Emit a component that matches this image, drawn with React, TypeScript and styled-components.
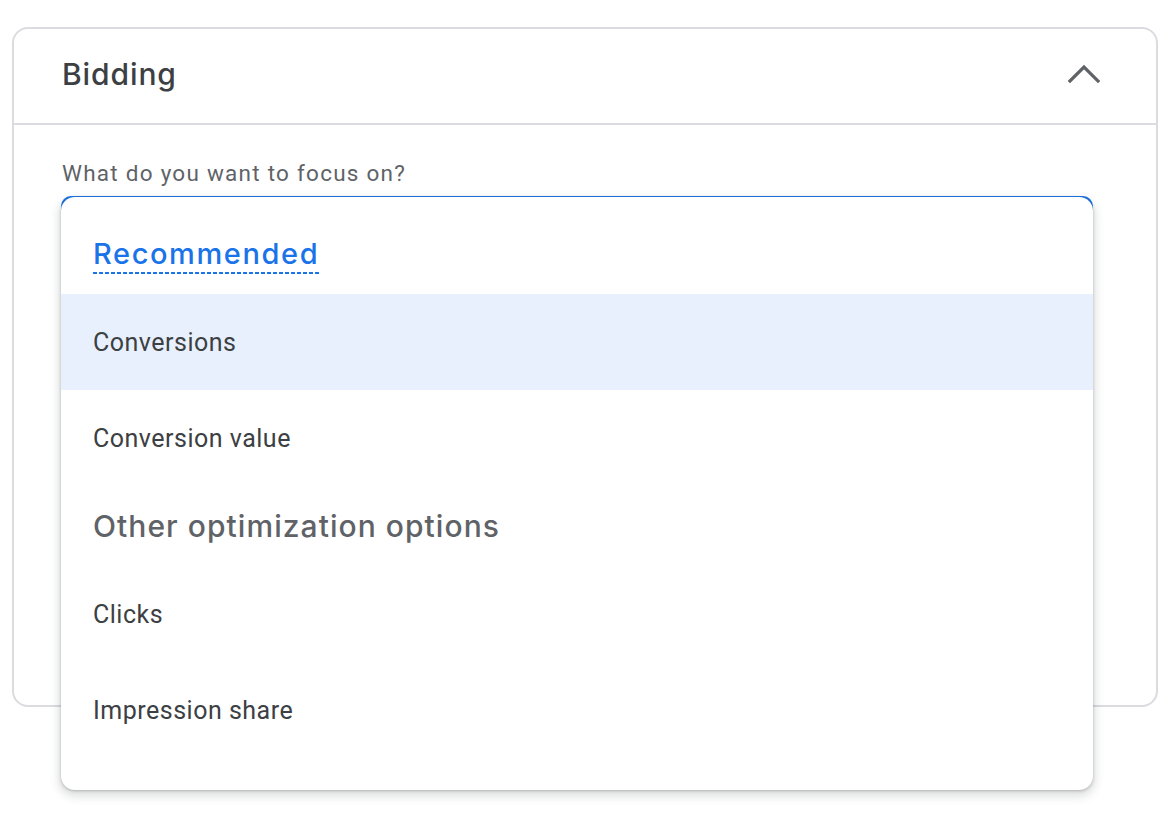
import React from "react";
import styled, { createGlobalStyle } from "styled-components";

const Global = createGlobalStyle`
  html, body { margin: 0; padding: 0; background: #fff; }
  body { font-family: Roboto, "Noto Sans", Arial, sans-serif; -webkit-font-smoothing: antialiased; }
`;

const Page = styled.div`
  padding: 27px 16px 0 12px;
  width: 1174px;
  height: 818px;
  box-sizing: border-box;
  overflow: hidden;
`;

const Card = styled.section`
  width: 1146px;
  box-sizing: border-box;
  border: 2px solid #dadce0;
  border-radius: 16px;
  background: #fff;
`;

const Header = styled.header`
  display: flex;
  align-items: center;
  justify-content: space-between;
  height: 96px;
  padding: 0 52px 4px 48px;
  box-sizing: border-box;
  border-bottom: 2px solid #dadce0;
`;

const Title = styled.h2`
  margin: 0;
  font-family: Inter, "Open Sans", sans-serif;
  font-size: 30px;
  font-weight: 500;
  letter-spacing: 0.9px;
  color: #3c4043;
`;

const Toggle = styled.button`
  border: 0;
  background: none;
  padding: 0;
  width: 40px;
  height: 40px;
  display: flex;
  align-items: center;
  justify-content: center;
  cursor: pointer;
`;

const Body = styled.div`
  position: relative;
  padding: 34px 48px 0 48px;
  height: 580px;
  box-sizing: border-box;
`;

const Label = styled.div`
  font-size: 22.5px;
  color: #5f6368;
  letter-spacing: 1.25px;
  line-height: 28px;
`;

const Field = styled.div`
  margin-top: 9px;
  margin-left: -1px;
  width: 1032px;
  height: 58px;
  box-sizing: border-box;
  border: 3px solid #1a73e8;
  border-radius: 10px;
`;

const Menu = styled.ul`
  position: absolute;
  left: 47px;
  top: 72px;
  width: 1032px;
  margin: 0;
  padding: 0 0 32px 0;
  list-style: none;
  background: #fff;
  border-radius: 14px;
  box-shadow: 0 4px 8px 3px rgba(60, 64, 67, 0.15), 0 1px 3px rgba(60, 64, 67, 0.3);
  overflow: hidden;
`;

const GroupHeader = styled.li<{ $first?: boolean }>`
  display: flex;
  align-items: center;
  height: ${(p) => (p.$first ? "97px" : "80px")};
  padding: ${(p) => (p.$first ? "18px 32px 0" : "0 32px")};
  box-sizing: border-box;
  font-family: Inter, "Open Sans", sans-serif;
  font-size: ${(p) => (p.$first ? "29px" : "30px")};
  font-weight: 500;
  letter-spacing: ${(p) => (p.$first ? "1.6px" : "1.05px")};
  color: ${(p) => (p.$first ? "#1a73e8" : "#5f6368")};
`;

const Dotted = styled.span`
  padding-bottom: 3px;
  background-image: linear-gradient(to right, #1a73e8 0 4px, transparent 4px 6px);
  background-size: 6px 2px;
  background-repeat: repeat-x;
  background-position: 0 100%;
`;

const Option = styled.li<{ $active?: boolean }>`
  display: flex;
  align-items: center;
  height: 96px;
  padding: 0 32px;
  font-size: 25px;
  color: #3c4043;
  background: ${(p) => (p.$active ? "#e8f0fe" : "#fff")};
  letter-spacing: 0.5px;
`;

export default function App() {
  return (
    <Page>
      <Global />
      <Card>
        <Header>
          <Title>Bidding</Title>
          <Toggle aria-label="Collapse">
            <svg width="36" height="24" viewBox="0 0 36 24">
              <path d="M4 19 L18 5 L32 19" fill="none" stroke="#5f6368" strokeWidth="3.2" strokeLinecap="square" />
            </svg>
          </Toggle>
        </Header>
        <Body>
          <Label>What do you want to focus on?</Label>
          <Field />
          <Menu>
            <GroupHeader $first>
              <Dotted>Recommended</Dotted>
            </GroupHeader>
            <Option $active>Conversions</Option>
            <Option>Conversion value</Option>
            <GroupHeader>Other optimization options</GroupHeader>
            <Option>Clicks</Option>
            <Option>Impression share</Option>
          </Menu>
        </Body>
      </Card>
    </Page>
  );
}
